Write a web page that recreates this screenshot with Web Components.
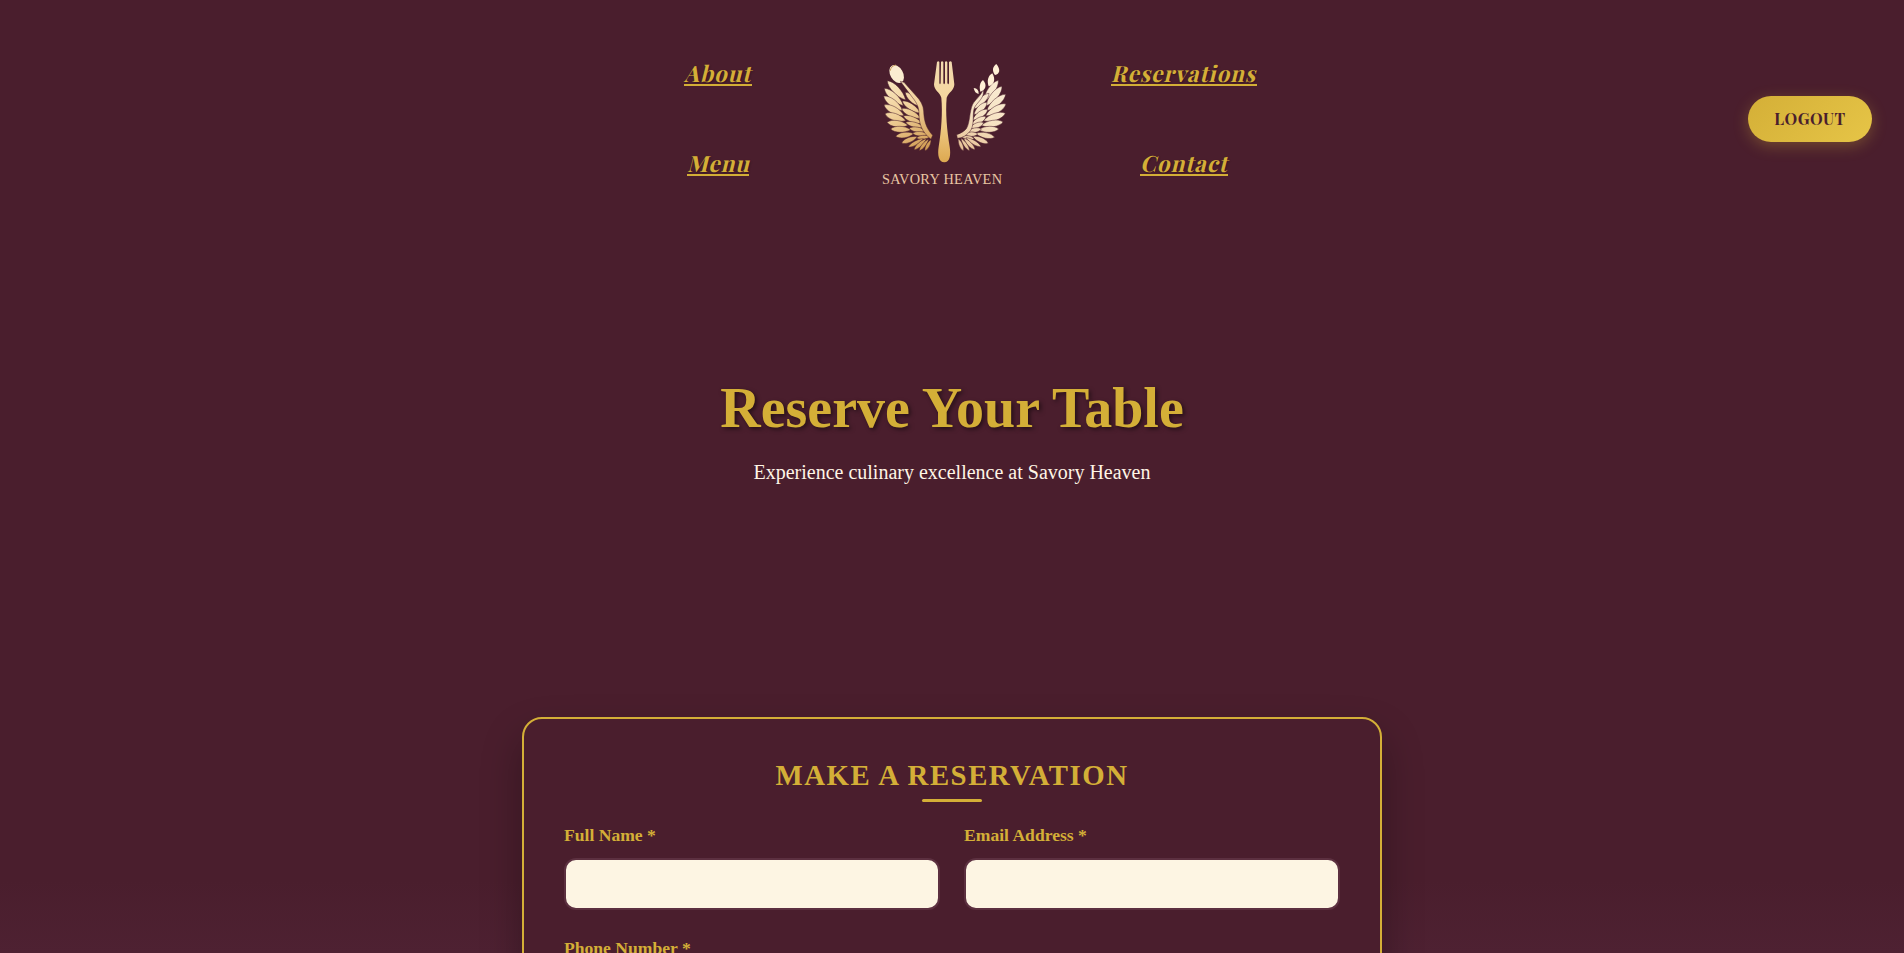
<!DOCTYPE html>
<html lang="en">
<head>
<meta charset="utf-8">
<title>Savory Heaven - Reservations</title>
<style>
html,body{margin:0;height:100%;overflow:hidden}
body{background:#4a1e2d;font-family:"Liberation Serif",serif;color:#fff5e6}
</style>
</head>
<body>
<reservation-page></reservation-page>
<script>
const define = (name, markup, setup) => customElements.define(name, class extends HTMLElement {
  constructor() {
    super();
    this.attachShadow({ mode: 'open' }).innerHTML = markup;
    if (setup) setup(this.shadowRoot);
  }
});

define('nav-link', `<style>
:host{display:block;height:24px}
a{display:block;width:fit-content;margin:0 auto;height:22px;color:#d4af37;font:700 22.4px/22px "Playfair Display","Liberation Serif",serif;letter-spacing:1px;text-decoration:none;border-bottom:2px solid #d4af37;white-space:nowrap;text-shadow:1px 1px 2px rgba(0,0,0,.3)}
span{display:block;transform:skewX(-14deg);transform-origin:0 20px}
</style><a href="#"><span><slot></slot></span></a>`);

define('brand-logo', `<style>
:host{display:block;width:170px;height:160px}
svg{display:block}
</style>
<svg width="170" height="160" viewBox="0 0 510 480">
<defs>
<linearGradient id="gl" x1="70" y1="90" x2="200" y2="330" gradientUnits="userSpaceOnUse"><stop offset="0" stop-color="#fdedcb"/><stop offset=".5" stop-color="#f0d09a"/><stop offset="1" stop-color="#d09a50"/></linearGradient>
<linearGradient id="gr" x1="430" y1="90" x2="310" y2="330" gradientUnits="userSpaceOnUse"><stop offset="0" stop-color="#fbeed8"/><stop offset=".6" stop-color="#f6e2c2"/><stop offset="1" stop-color="#e6c196"/></linearGradient>
<linearGradient id="gf" x1="0" y1="66" x2="0" y2="366" gradientUnits="userSpaceOnUse"><stop offset="0" stop-color="#f3dab0"/><stop offset=".5" stop-color="#f5d698"/><stop offset="1" stop-color="#dda951"/></linearGradient>
</defs>
<g fill="url(#gl)" id="lw"></g><g fill="url(#gr)" id="rw"></g>
<ellipse cx="110" cy="102" rx="19" ry="29" transform="rotate(-30 110 102)" fill="#fbecd0"/>
<path d="M91 92Q92 79 107 75" fill="none" stroke="#c89a5a" stroke-width="3"/>
<path d="M121 124L132 127L166 165Q190 189 191 213C192 240 197 263 218 286L213 298C184 275 177 249 177 222C177 203 171 189 157 172Z" fill="url(#gl)" stroke="#4a1e2d" stroke-width="1.5"/>
<path d="M370 148C362 169 345 179 338 193C328 214 330 250 319 266Q309 278 290 284L292 295Q315 294 333 270C345 248 335 216 345 200C354 185 375 172 370 148Z" fill="url(#gr)" stroke="#4a1e2d" stroke-width="1.5"/>
<g fill="#fff0d5">
<path d="M409 72C423 89 419 102 405 105C395 92 398 80 409 72Z"/>
<path d="M397 100C408 118 402 135 386 139C380 123 384 107 397 100Z"/>
<path d="M369 120C383 135 376 151 361 155C357 139 360 127 369 120Z"/>
<path d="M341 144Q357 145 356 162Q344 160 341 144Z"/>
</g>
<path d="M231 66Q235 62 238 66V128Q240 137 242 128L243 66Q246 62 250 66V128Q252 138 255 128V66Q258 62 262 66V128Q265 137 267 128V66Q272 62 275 66L283 133C283 151 266 157 260 173C256 218 261 270 269 320C273 344 270 367 253 367C236 367 232 344 236 320C244 270 248 218 244 173C239 157 222 151 222 133Z" fill="url(#gf)"/>
<text x="66" y="431" font-family="Liberation Serif,serif" font-size="43" textLength="360" lengthAdjust="spacing" fill="#e9c6a3">SAVORY HEAVEN</text>
</svg>`, root => {
  // Each feather: root point, tip point, half width.
  const left = [
    [137,180,82,122,14],[130,197,73,145,14],[128,212,71,168,14],[132,227,72,195,14],[137,242,75,221,14],[144,256,81,247,13],[152,269,92,267,12],[161,281,107,289,11],[172,290,125,309,10],
    [181,200,136,157,12],[181,219,127,183,12],[182,235,125,206,12],[187,250,130,228,11],[192,262,137,247,10],[198,273,148,265,10],[204,283,158,280,9],[210,290,170,294,8],
    [190,296,145,321,8],[199,296,162,329,8],[206,297,178,332,7],[213,299,195,332,7]];
  const right = [
    [370,185,415,121,14],[378,198,426,139,14],[380,212,437,163,14],[377,227,438,192,14],[371,242,436,220,14],[364,256,429,246,13],[356,269,416,267,12],[347,280,404,292,11],[338,289,385,310,10],
    [342,207,387,160,12],[342,224,381,187,12],[338,240,383,208,12],[334,254,378,230,11],[329,265,371,248,10],[321,275,364,267,9],[312,283,353,282,9],[304,290,342,296,8],
    [318,293,363,320,8],[311,294,345,329,8],[303,295,328,332,7],[295,296,310,332,7]];
  const path = ([x1, y1, x2, y2, w]) => {
    const dx = x2 - x1, dy = y2 - y1, l = Math.hypot(dx, dy), nx = -dy / l * w, ny = dx / l * w;
    return `<path stroke="#4a1e2d" stroke-width="1.5" d="M${x1} ${y1}C${x1+dx*.3+nx} ${y1+dy*.3+ny} ${x1+dx*.8+nx} ${y1+dy*.8+ny} ${x2} ${y2}C${x1+dx*.8-nx} ${y1+dy*.8-ny} ${x1+dx*.3-nx} ${y1+dy*.3-ny} ${x1} ${y1}Z"/>`;
  };
  root.getElementById('lw').innerHTML = left.map(path).join('');
  root.getElementById('rw').innerHTML = right.map(path).join('');
});

define('logout-button', `<style>
:host{display:block}
button{display:block;width:124px;height:46px;padding:0;border:0;border-radius:25px;background:linear-gradient(135deg,#d4af37,#e6c547);color:#4a1e2d;font:700 16px/46px "Playfair Display","Liberation Serif",serif;letter-spacing:.5px;box-shadow:0 4px 15px rgba(212,175,55,.3)}
</style><button><slot></slot></button>`);

define('site-header', `<style>
:host{display:grid;grid-template-columns:1fr auto 1fr;align-items:center;height:237px;box-sizing:border-box;padding:0 32px}
.nav{grid-column:2;display:grid;grid-template-columns:215px 170px 227px;width:612px;height:160px;margin:3px 0 0 -2px}
.col{display:flex;flex-direction:column;gap:66px;padding-top:22px}
.left{padding-right:69px}
.right{padding-left:81px}
logout-button{grid-column:3;justify-self:end}
</style>
<div class="nav">
<div class="col left"><nav-link>About</nav-link><nav-link>Menu</nav-link></div>
<brand-logo></brand-logo>
<div class="col right"><nav-link>Reservations</nav-link><nav-link>Contact</nav-link></div>
</div>
<logout-button>LOGOUT</logout-button>`);

define('page-hero', `<style>
:host{display:flex;flex-direction:column;align-items:center;height:480px;box-sizing:border-box;padding-top:139px}
h1{margin:0;font-size:56px;line-height:64px;color:#d4af37;text-shadow:2px 2px 4px rgba(0,0,0,.5);white-space:nowrap}
p{margin:21px 0 0;font-size:20px;line-height:22px;white-space:nowrap}
</style><h1><slot name="title"></slot></h1><p><slot></slot></p>`);

define('form-field', `<style>
:host{display:block}
label{display:block;font-weight:700;font-size:17.6px;line-height:20px;color:#d4af37}
input{display:block;box-sizing:border-box;width:100%;height:52px;margin:13px 0 0;border:2px solid #5c3040;border-radius:12px;background:#fdf5e3;padding:0 14px;outline:none}
</style><label><slot></slot></label><input>`);

define('reservation-form', `<style>
:host{display:block;box-sizing:border-box;width:860px;height:700px;margin:0 auto;padding:40px;border:2px solid #d4af37;border-radius:20px;background:#4a1e2d;box-shadow:0 20px 40px rgba(0,0,0,.3)}
h2{margin:0;font-size:28.8px;line-height:33px;letter-spacing:1.5px;color:#d4af37;text-align:center}
h2::after{content:"";display:block;width:60px;height:3px;border-radius:2px;background:#d4af37;margin:7px auto 23px}
.grid{display:grid;grid-template-columns:376px 376px;column-gap:24px;row-gap:28px}
</style>
<h2>MAKE A RESERVATION</h2>
<div class="grid"><form-field>Full Name *</form-field><form-field>Email Address *</form-field><form-field>Phone Number *</form-field></div>`);

define('reservation-page', `<style>
:host{display:block;height:953px;overflow:hidden;background:linear-gradient(#4a1e2d 0,#4a1e2d 880px,#4e2132 953px)}
</style>
<site-header></site-header>
<page-hero><span slot="title">Reserve Your Table</span>Experience culinary excellence at Savory Heaven</page-hero>
<reservation-form></reservation-form>`);
</script>
</body>
</html>
